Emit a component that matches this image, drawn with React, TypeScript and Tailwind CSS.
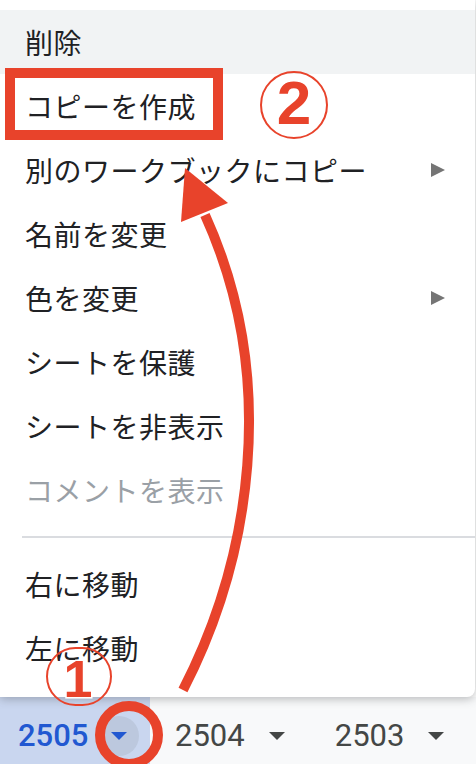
import React from 'react'

// Sheet-tab context menu with tutorial annotations (red box, circled steps, arrow)

const RED = '#e8432b'

interface MenuItem {
  label: string
  submenu?: boolean
  disabled?: boolean
  hover?: boolean
}

const topItems: MenuItem[] = [
  { label: '削除', hover: true },
  { label: 'コピーを作成' },
  { label: '別のワークブックにコピー', submenu: true },
  { label: '名前を変更' },
  { label: '色を変更', submenu: true },
  { label: 'シートを保護' },
  { label: 'シートを非表示' },
  { label: 'コメントを表示', disabled: true },
]

const bottomItems: MenuItem[] = [{ label: '右に移動' }, { label: '左に移動' }]

function SubmenuArrow() {
  return (
    <svg width="14" height="14" viewBox="0 0 14 14" className="shrink-0">
      <polygon points="0,0 14,7 0,14" fill="#757575" />
    </svg>
  )
}

function Row({ item }: { item: MenuItem }) {
  return (
    <div
      className={`flex h-[64px] items-center justify-between pl-[25px] pr-[30px] ${
        item.hover ? 'bg-[#f1f3f4]' : ''
      }`}
    >
      <span
        className={`text-[28px] leading-none tracking-[0.5px] ${
          item.disabled ? 'text-[#9aa0a6]' : 'text-[#202124]'
        }`}
      >
        {item.label}
      </span>
      {item.submenu && <SubmenuArrow />}
    </div>
  )
}

function DropTriangle({ color }: { color: string }) {
  return (
    <svg width="16" height="8" viewBox="0 0 16 8">
      <polygon points="0,0 16,0 8,8" fill={color} />
    </svg>
  )
}

export default function App() {
  return (
    <div className="relative h-[764px] w-[476px] overflow-hidden bg-white font-['Noto_Sans_CJK_JP','Noto_Sans',sans-serif]">
      {/* context menu */}
      <div className="relative z-10 w-[475px] rounded-br-[8px] bg-white pt-[10px] pb-[17px] shadow-[0_2px_10px_rgba(60,64,67,0.35)]">
        {topItems.map((it) => (
          <Row key={it.label} item={it} />
        ))}
        <div className="flex h-[30px] items-center pl-[22px]">
          <div className="h-[2px] w-full bg-[#dadce0]" />
        </div>
        {bottomItems.map((it) => (
          <Row key={it.label} item={it} />
        ))}
      </div>

      {/* sheet tabs */}
      <div className="flex h-[67px] items-start bg-[#f8f9fa] font-['Roboto',sans-serif] text-[31px]">
        <div className="flex h-full w-[150px] items-center bg-[#c9d6ef] pl-[18px] pt-[11px]">
          <span className="font-medium text-[#2158d1]">2505</span>
          <div className="ml-[11px] flex h-[40px] w-[40px] items-center justify-center rounded-full bg-[#bcc8de]">
            <DropTriangle color="#2158d1" />
          </div>
        </div>
        <div className="flex h-full items-center pl-[25px] pr-[10px] pt-[11px]">
          <span className="text-[#444746]">2504</span>
          <div className="ml-[12px] flex h-[40px] w-[40px] items-center justify-center">
            <DropTriangle color="#444746" />
          </div>
        </div>
        <div className="flex h-full items-center pl-[28px] pt-[11px]">
          <span className="text-[#444746]">2503</span>
          <div className="ml-[12px] flex h-[40px] w-[40px] items-center justify-center">
            <DropTriangle color="#444746" />
          </div>
        </div>
      </div>

      {/* annotations */}
      <div className="pointer-events-none absolute left-[5px] top-[68px] z-20 h-[72px] w-[218px] border-[10px] border-[#e8432b]" />

      <div className="pointer-events-none absolute left-[260px] top-[71px] z-20 flex h-[68px] w-[68px] items-center justify-center rounded-full border-2 border-[#e8432b]">
        <span className="mt-[-4px] font-['Liberation_Sans',sans-serif] text-[62px] font-bold leading-none text-[#e8432b]">
          2
        </span>
      </div>

      <div className="pointer-events-none absolute left-[46px] top-[647px] z-20 flex h-[59px] w-[66px] items-center justify-center rounded-full border-2 border-[#e8432b]">
        <span className="mt-[4px] ml-[-2px] font-['Liberation_Sans',sans-serif] text-[52px] font-bold leading-none text-[#e8432b] [-webkit-text-stroke:3px_white] [paint-order:stroke_fill]">
          1
        </span>
      </div>

      <div className="pointer-events-none absolute left-[95px] top-[701px] z-20 h-[68px] w-[68px] rounded-full border-[10px] border-[#e8432b]" />

      <svg
        className="pointer-events-none absolute inset-0 z-30"
        width="476"
        height="764"
        viewBox="0 0 476 764"
      >
        <path d="M183 690 C250 560 280 380 205 215" fill="none" stroke={RED} strokeWidth="10" />
        <polygon points="185,168 181,222 228,203" fill={RED} />
      </svg>
    </div>
  )
}
